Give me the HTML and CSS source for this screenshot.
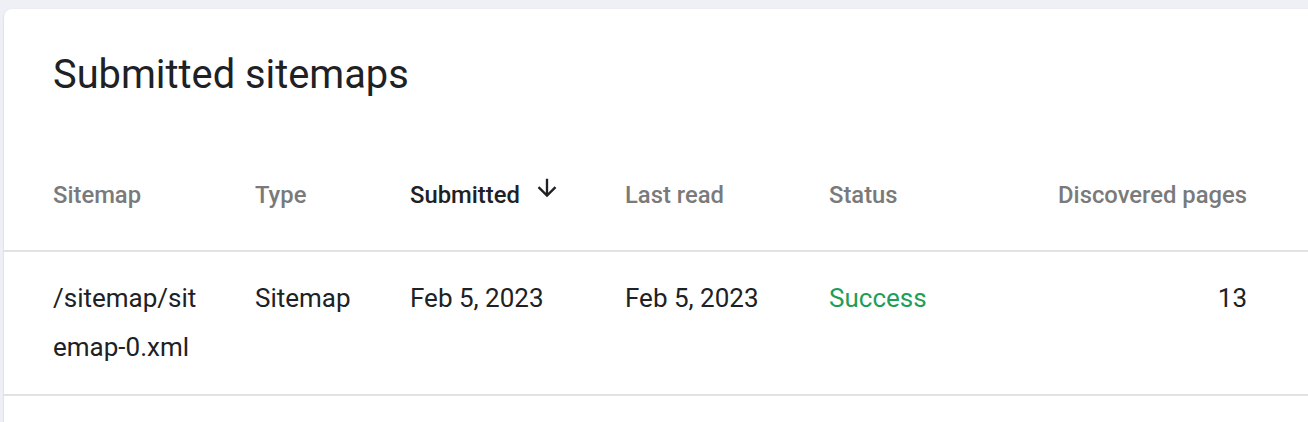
FILE: index.html
```html
<!DOCTYPE html>
<html lang="en">
<head>
<meta charset="utf-8">
<title>Submitted sitemaps</title>
<link rel="stylesheet" href="styles.css">
</head>
<body>
<div class="card">
  <h1 class="title">Submitted sitemaps</h1>
  <div class="table">
    <div class="row head">
      <div class="cell">Sitemap</div>
      <div class="cell">Type</div>
      <div class="cell active">Submitted <svg class="sort" viewBox="0 0 24 24" width="28" height="28"><path d="M20 12l-1.41-1.41L13 16.17V4h-2v12.17l-5.58-5.59L4 12l8 8 8-8z" fill="currentColor"/></svg></div>
      <div class="cell">Last read</div>
      <div class="cell">Status</div>
      <div class="cell num">Discovered pages</div>
    </div>
    <div class="row body">
      <div class="cell path">/sitemap/sitemap-0.xml</div>
      <div class="cell">Sitemap</div>
      <div class="cell">Feb 5, 2023</div>
      <div class="cell">Feb 5, 2023</div>
      <div class="cell success">Success</div>
      <div class="cell num">13</div>
    </div>
  </div>
</div>
</body>
</html>
```
FILE: styles.css
```css
html, body {
  margin: 0;
  padding: 0;
}
body {
  background: #eef0f5;
  font-family: Roboto, "Liberation Sans", Arial, sans-serif;
  overflow: hidden;
  height: 422px;
}
.card {
  margin: 9px 0 0 4px;
  width: 1320px;
  height: 440px;
  background: #fff;
  border-radius: 8px;
  box-shadow: 0 1px 2px rgba(60, 64, 67, 0.25);
}
.title {
  margin: 0;
  padding: 40px 0 0 49px;
  height: 60px;
  font-size: 39.8px;
  line-height: 52px;
  font-weight: 400;
  color: #202124;
}
.table {
  margin-top: 31px;
}
.row {
  display: grid;
  grid-template-columns: 202px 155px 215px 204px 1fr 1fr;
  padding: 0 77px 0 49px;
  border-bottom: 2px solid #e2e2e2;
}
.head {
  height: 110px;
  align-items: center;
  font-size: 23.8px;
  font-weight: 500;
  color: #7a7a7a;
}
.head .cell {
  display: flex;
  align-items: center;
  gap: 13px;
}
.head .cell.num {
  justify-content: flex-end;
}
.head .active {
  color: #202124;
}
.sort {
  margin-top: -15px;
  color: #202124;
}
.body {
  padding-top: 22px;
  padding-bottom: 22px;
  font-size: 26px;
  line-height: 49px;
  color: #202124;
  align-items: start;
}
.path {
  width: 148px;
  word-break: break-all;
}
.num {
  text-align: right;
}
.success {
  color: #1e9e58;
}
```
